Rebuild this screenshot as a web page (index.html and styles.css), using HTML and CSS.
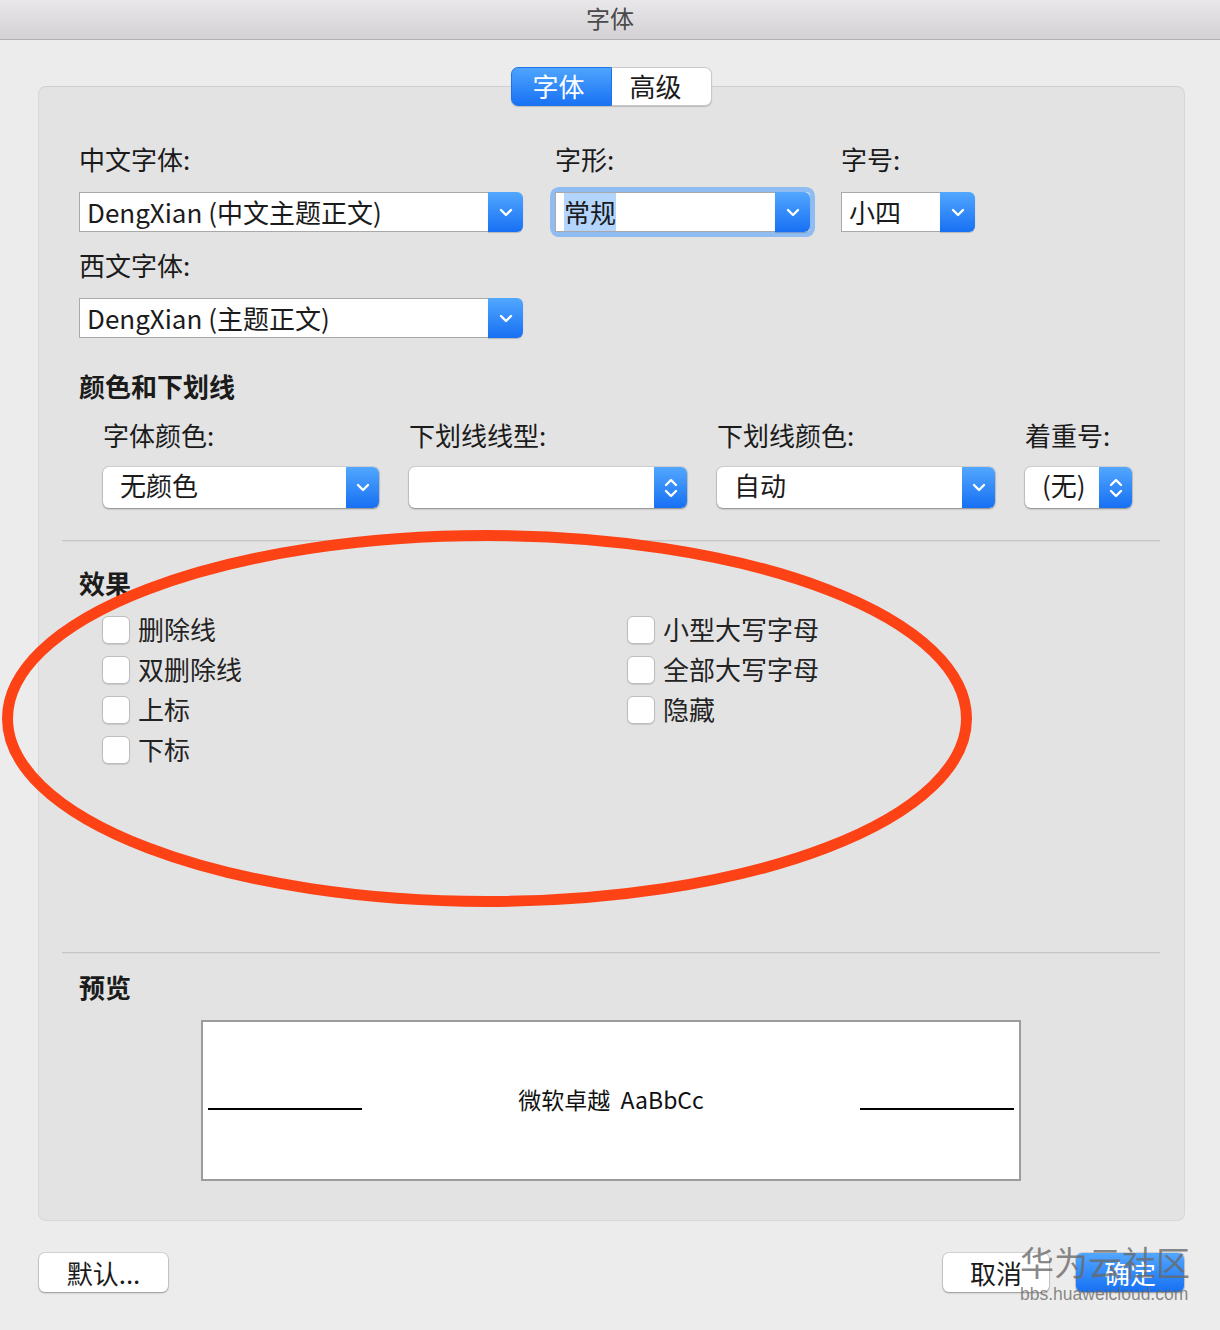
FILE: index.html
```html
<!DOCTYPE html>
<html lang="zh-CN">
<head>
    <meta charset="UTF-8">
    <title>字体</title>
    <link rel="stylesheet" href="styles.css">
</head>
<body>
<div class="titlebar">字体</div>

<div class="dialog">
    <div class="tabs">
        <span class="tab active">字体</span><span class="tab">高级</span>
    </div>

    <div class="panel">
        <div class="font-row">
            <div class="field col-name">
                <label>中文字体:</label>
                <div class="combo">
                    <span class="combo-text">DengXian (中文主题正文)</span>
                    <span class="combo-btn"><svg width="14" height="9" viewBox="0 0 14 9"><path d="M2 2l5 5 5-5" fill="none" stroke="#fff" stroke-width="2.4" stroke-linecap="round" stroke-linejoin="round"/></svg></span>
                </div>
                <label class="next">西文字体:</label>
                <div class="combo">
                    <span class="combo-text">DengXian (主题正文)</span>
                    <span class="combo-btn"><svg width="14" height="9" viewBox="0 0 14 9"><path d="M2 2l5 5 5-5" fill="none" stroke="#fff" stroke-width="2.4" stroke-linecap="round" stroke-linejoin="round"/></svg></span>
                </div>
            </div>
            <div class="field col-style">
                <label>字形:</label>
                <div class="combo focused">
                    <span class="combo-text"><span class="selected">常规</span></span>
                    <span class="combo-btn"><svg width="14" height="9" viewBox="0 0 14 9"><path d="M2 2l5 5 5-5" fill="none" stroke="#fff" stroke-width="2.4" stroke-linecap="round" stroke-linejoin="round"/></svg></span>
                </div>
            </div>
            <div class="field col-size">
                <label>字号:</label>
                <div class="combo">
                    <span class="combo-text">小四</span>
                    <span class="combo-btn"><svg width="14" height="9" viewBox="0 0 14 9"><path d="M2 2l5 5 5-5" fill="none" stroke="#fff" stroke-width="2.4" stroke-linecap="round" stroke-linejoin="round"/></svg></span>
                </div>
            </div>
        </div>

        <h3 class="group-title">颜色和下划线</h3>
        <div class="color-row">
            <div class="field w-color">
                <label>字体颜色:</label>
                <div class="popup">
                    <span class="popup-text">无颜色</span>
                    <span class="popup-btn"><svg width="14" height="9" viewBox="0 0 14 9"><path d="M2 2l5 5 5-5" fill="none" stroke="#fff" stroke-width="2.4" stroke-linecap="round" stroke-linejoin="round"/></svg></span>
                </div>
            </div>
            <div class="field w-line">
                <label>下划线线型:</label>
                <div class="popup">
                    <span class="popup-text"></span>
                    <span class="popup-btn"><svg width="14" height="22" viewBox="0 0 14 22"><path d="M2 8l5-5 5 5M2 14l5 5 5-5" fill="none" stroke="#fff" stroke-width="2.4" stroke-linecap="round" stroke-linejoin="round"/></svg></span>
                </div>
            </div>
            <div class="field w-line">
                <label>下划线颜色:</label>
                <div class="popup">
                    <span class="popup-text">自动</span>
                    <span class="popup-btn"><svg width="14" height="9" viewBox="0 0 14 9"><path d="M2 2l5 5 5-5" fill="none" stroke="#fff" stroke-width="2.4" stroke-linecap="round" stroke-linejoin="round"/></svg></span>
                </div>
            </div>
            <div class="field w-emph">
                <label>着重号:</label>
                <div class="popup">
                    <span class="popup-text">(无)</span>
                    <span class="popup-btn"><svg width="14" height="22" viewBox="0 0 14 22"><path d="M2 8l5-5 5 5M2 14l5 5 5-5" fill="none" stroke="#fff" stroke-width="2.4" stroke-linecap="round" stroke-linejoin="round"/></svg></span>
                </div>
            </div>
        </div>

        <div class="sep"></div>

        <h3 class="group-title effects-title">效果</h3>
        <div class="effects">
            <label class="check"><span class="box"></span>删除线</label>
            <label class="check"><span class="box"></span>双删除线</label>
            <label class="check"><span class="box"></span>上标</label>
            <label class="check"><span class="box"></span>下标</label>
            <label class="check"><span class="box"></span>小型大写字母</label>
            <label class="check"><span class="box"></span>全部大写字母</label>
            <label class="check"><span class="box"></span>隐藏</label>
        </div>

        <div class="sep sep-low"></div>

        <h3 class="group-title preview-title">预览</h3>
        <div class="preview">
            <span class="rule"></span>
            <span class="sample">微软卓越&nbsp;&nbsp;AaBbCc</span>
            <span class="rule"></span>
        </div>
    </div>

    <div class="buttons">
        <button class="btn btn-default">默认...</button>
        <div class="btn-group">
            <button class="btn btn-cancel">取消</button>
            <button class="btn btn-ok">确定</button>
        </div>
    </div>
</div>

<!-- red circle marking the effects block -->
<svg class="mark" width="1220" height="1330" viewBox="0 0 1220 1330">
    <ellipse cx="487" cy="718.5" rx="479.5" ry="183" fill="none" stroke="#fd4216" stroke-width="11"/>
</svg>

<div class="watermark">
    <div class="wm-name">华为云社区</div>
    <div class="wm-url">bbs.huaweicloud.com</div>
</div>
</body>
</html>
```

FILE: styles.css
```css
* {
    box-sizing: border-box;
}

body {
    margin: 0;
    width: 1220px;
    height: 1330px;
    background-color: #ececec;
    font-family: "Noto Sans CJK SC", "Noto Sans", sans-serif;
    color: #1b1b1b;
    position: relative;
    overflow: hidden;
}

.titlebar {
    height: 40px;
    line-height: 35px;
    text-align: center;
    font-size: 24px;
    color: #4a4a4a;
    background: linear-gradient(#e9e7e9, #d3d1d3);
    border-bottom: 1px solid #b1b1b1;
}

.dialog {
    padding: 27px 35px 0 38px;
}

/* segmented control */
.tabs {
    display: flex;
    justify-content: center;
    position: relative;
    z-index: 1;
    height: 39px;
}

.tab {
    width: 100px;
    height: 39px;
    line-height: 36px;
    font-size: 26px;
    text-align: center;
    padding-right: 12px;
    background: #fff;
    border: 1px solid #c9c9c9;
    border-left: none;
    border-radius: 0 7px 7px 0;
    box-shadow: 0 1px 1px rgba(0, 0, 0, 0.18);
}

.tab.active {
    width: 101px;
    padding-right: 6px;
    color: #fff;
    background: linear-gradient(#4fa4fd, #1872f4);
    border: 1px solid #1f74ec;
    border-radius: 7px 0 0 7px;
}

.panel {
    margin-top: -20px;
    height: 1135px;
    background-color: #e3e3e3;
    border: 1px solid #d7d7d7;
    border-top-color: #cfcfcf;
    border-radius: 8px;
    padding: 54px 24px 0 40px;
}

.field label {
    display: block;
    font-size: 26px;
    line-height: 36px;
    height: 36px;
}

.field label.next {
    margin-top: 15px;
}

.font-row {
    display: flex;
}

.col-name {
    width: 444px;
}

.col-style {
    width: 255px;
    margin-left: 32px;
}

.col-size {
    width: 134px;
    margin-left: 31px;
}

/* combo box: text field + blue arrow */
.combo {
    display: flex;
    height: 40px;
    margin-top: 15px;
}

.combo-text {
    flex: 1;
    background: #fff;
    border: 1px solid #a9a9a9;
    border-right: none;
    font-size: 26px;
    line-height: 37px;
    padding-left: 7px;
    white-space: nowrap;
    overflow: hidden;
}

.combo-btn {
    width: 35px;
    display: flex;
    align-items: center;
    justify-content: center;
    background: linear-gradient(#52a7fe, #1770f3);
    border-radius: 0 6px 6px 0;
    box-shadow: 0 1px 1px rgba(0, 0, 0, 0.2);
}

.combo.focused {
    border-radius: 4px;
    box-shadow: 0 0 0 5px #8fbcf1;
}

.combo.focused .combo-text {
    padding-left: 8px;
}

.selected {
    background-color: #b3d5fd;
    padding: 1px 0;
}

.group-title {
    margin: 30px 0 0;
    font-size: 26px;
    font-weight: bold;
    line-height: 36px;
}

.color-row {
    display: flex;
    gap: 30px;
    padding-left: 24px;
    margin-top: 13px;
}

.w-color {
    width: 276px;
}

.w-line {
    width: 278px;
}

.w-emph {
    width: 107px;
}

/* rounded popup button */
.popup {
    display: flex;
    height: 41px;
    margin-top: 14px;
    background: #fff;
    border-radius: 6px;
    box-shadow: 0 0 0 1px rgba(0, 0, 0, 0.08), 0 1px 2px rgba(0, 0, 0, 0.35);
    overflow: hidden;
}

.popup-text {
    flex: 1;
    font-size: 26px;
    line-height: 35px;
    padding-left: 17px;
}

.popup-btn {
    width: 33px;
    display: flex;
    align-items: center;
    justify-content: center;
    background: linear-gradient(#52a7fe, #1770f3);
}

.sep {
    height: 2px;
    margin: 32px 0 0 -17px;
    width: 1098px;
    border-top: 1px solid #c6c6c6;
    border-bottom: 1px solid #dadada;
}

.effects-title {
    margin-top: 23px;
}

.effects {
    display: grid;
    grid-template-columns: 525px auto;
    grid-template-rows: repeat(4, 40px);
    grid-auto-flow: column;
    padding-left: 23px;
    margin-top: 9px;
}

.check {
    display: flex;
    align-items: center;
    font-size: 26px;
    line-height: 36px;
    padding-bottom: 3px;
    color: #232323;
}

.box {
    width: 28px;
    height: 28px;
    margin: 2px 8px 0 0;
    background: #fff;
    border: 1px solid #bdbdbd;
    border-radius: 6px;
    box-shadow: 0 1px 1px rgba(0, 0, 0, 0.12);
}

.sep-low {
    margin-top: 182px;
}

.preview-title {
    margin-top: 15px;
}

.preview {
    width: 820px;
    height: 161px;
    margin: 15px 0 0 122px;
    background: #fff;
    border: 2px solid #9c9c9c;
    display: flex;
    align-items: center;
    justify-content: space-between;
    padding: 0 5px;
}

.rule {
    width: 154px;
    height: 2px;
    margin-top: 16px;
    background: #000;
}

.sample {
    font-size: 23px;
    line-height: 30px;
    padding-bottom: 4px;
    color: #111;
}

.buttons {
    display: flex;
    justify-content: space-between;
    margin-top: 32px;
    padding: 0 1px;
}

.btn-group {
    display: flex;
    gap: 27px;
}

.btn {
    height: 39px;
    font-family: "Noto Sans CJK SC", "Noto Sans", sans-serif;
    font-size: 26px;
    line-height: 36px;
    padding: 0;
    color: #1b1b1b;
    background: #fff;
    border: none;
    border-radius: 6px;
    box-shadow: 0 0 0 1px rgba(0, 0, 0, 0.1), 0 1px 2px rgba(0, 0, 0, 0.3);
}

.btn-default {
    width: 129px;
}

.btn-cancel {
    width: 106px;
}

.btn-ok {
    width: 108px;
    color: #fff;
    background: linear-gradient(#52a7fe, #1670f3);
}

.mark {
    position: absolute;
    left: 0;
    top: 0;
    pointer-events: none;
}

.watermark {
    position: absolute;
    left: 1020px;
    top: 1242px;
    color: rgba(105, 105, 105, 0.78);
}

.wm-name {
    font-size: 34px;
    line-height: 40px;
}

.wm-url {
    font-family: "Liberation Sans", Arial, sans-serif;
    font-size: 17.5px;
    line-height: 20px;
    margin-top: 2px;
}
```
